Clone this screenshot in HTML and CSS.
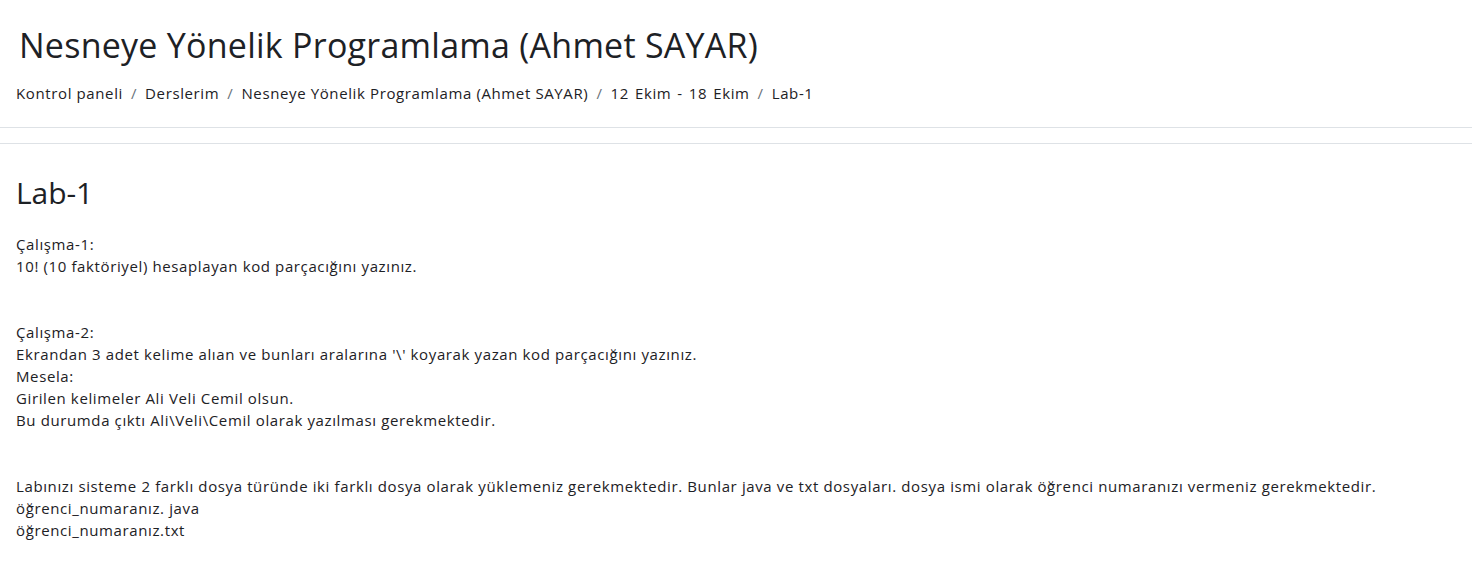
FILE: index.html
```html
<!DOCTYPE html>
<html lang="tr">
<head>
<meta charset="utf-8">
<title>Lab-1</title>
<link rel="stylesheet" href="styles.css">
</head>
<body>
<header class="page-header">
  <h1 class="page-title">Nesneye Yönelik Programlama (Ahmet SAYAR)</h1>
  <nav class="breadcrumb">
    <a href="#">Kontrol paneli</a><span class="sep">/</span>
    <a href="#">Derslerim</a><span class="sep">/</span>
    <a href="#">Nesneye Yönelik Programlama (Ahmet SAYAR)</a><span class="sep">/</span>
    <a href="#" class="dates">12 Ekim - 18 Ekim</a><span class="sep">/</span>
    <a href="#">Lab-1</a>
  </nav>
</header>
<main class="region-main">
  <h2 class="activity-title">Lab-1</h2>
  <div class="intro">
    <p>Çalışma-1:<br>10! (10 faktöriyel) hesaplayan kod parçacığını yazınız.</p>
    <p class="blank">&nbsp;</p>
    <p>Çalışma-2:<br>Ekrandan 3 adet kelime alıan ve bunları aralarına '\' koyarak yazan kod parçacığını yazınız.<br>Mesela:<br>Girilen kelimeler Ali Veli Cemil olsun.<br>Bu durumda çıktı Ali\Veli\Cemil olarak yazılması gerekmektedir.</p>
    <p class="blank">&nbsp;</p>
    <p>Labınızı sisteme 2 farklı dosya türünde iki farklı dosya olarak yüklemeniz gerekmektedir. Bunlar java ve txt dosyaları. dosya ismi olarak öğrenci numaranızı vermeniz gerekmektedir.<br>öğrenci_numaranız. java<br>öğrenci_numaranız.txt</p>
  </div>
</main>
</body>
</html>
```
FILE: styles.css
```css
html, body {
  margin: 0;
  padding: 0;
  background: #fff;
}
body {
  font-family: "Open Sans", "Noto Sans", sans-serif;
  font-size: 15px;
  line-height: 22px;
  letter-spacing: 0.62px;
  color: #1d2125;
}
.page-header {
  padding: 20px 16px 23px 16px;
  border-bottom: 1px solid #dee2e6;
}
.page-title {
  margin: 0 0 0 3px;
  font-size: 34px;
  font-weight: 400;
  line-height: 50px;
  letter-spacing: 0.25px;
  color: #1d2125;
}
.breadcrumb {
  margin-top: 12px;
  display: flex;
  flex-wrap: wrap;
  align-items: center;
}
.breadcrumb a {
  color: #1d2125;
  text-decoration: none;
}
.breadcrumb .dates {
  word-spacing: 1.5px;
}
.breadcrumb .sep {
  padding: 0 8px 0 8px;
  color: #6a737b;
}
.region-main {
  margin-top: 15px;
  border-top: 1px solid #dee2e6;
  padding: 29px 16px 20px 16px;
}
.activity-title {
  margin: 0 0 20px 0;
  font-size: 30px;
  font-weight: 400;
  line-height: 40px;
  letter-spacing: -0.1px;
}
.intro p {
  margin: 0 0 22px 0;
}
.intro p.blank {
  margin: 0;
}
```
